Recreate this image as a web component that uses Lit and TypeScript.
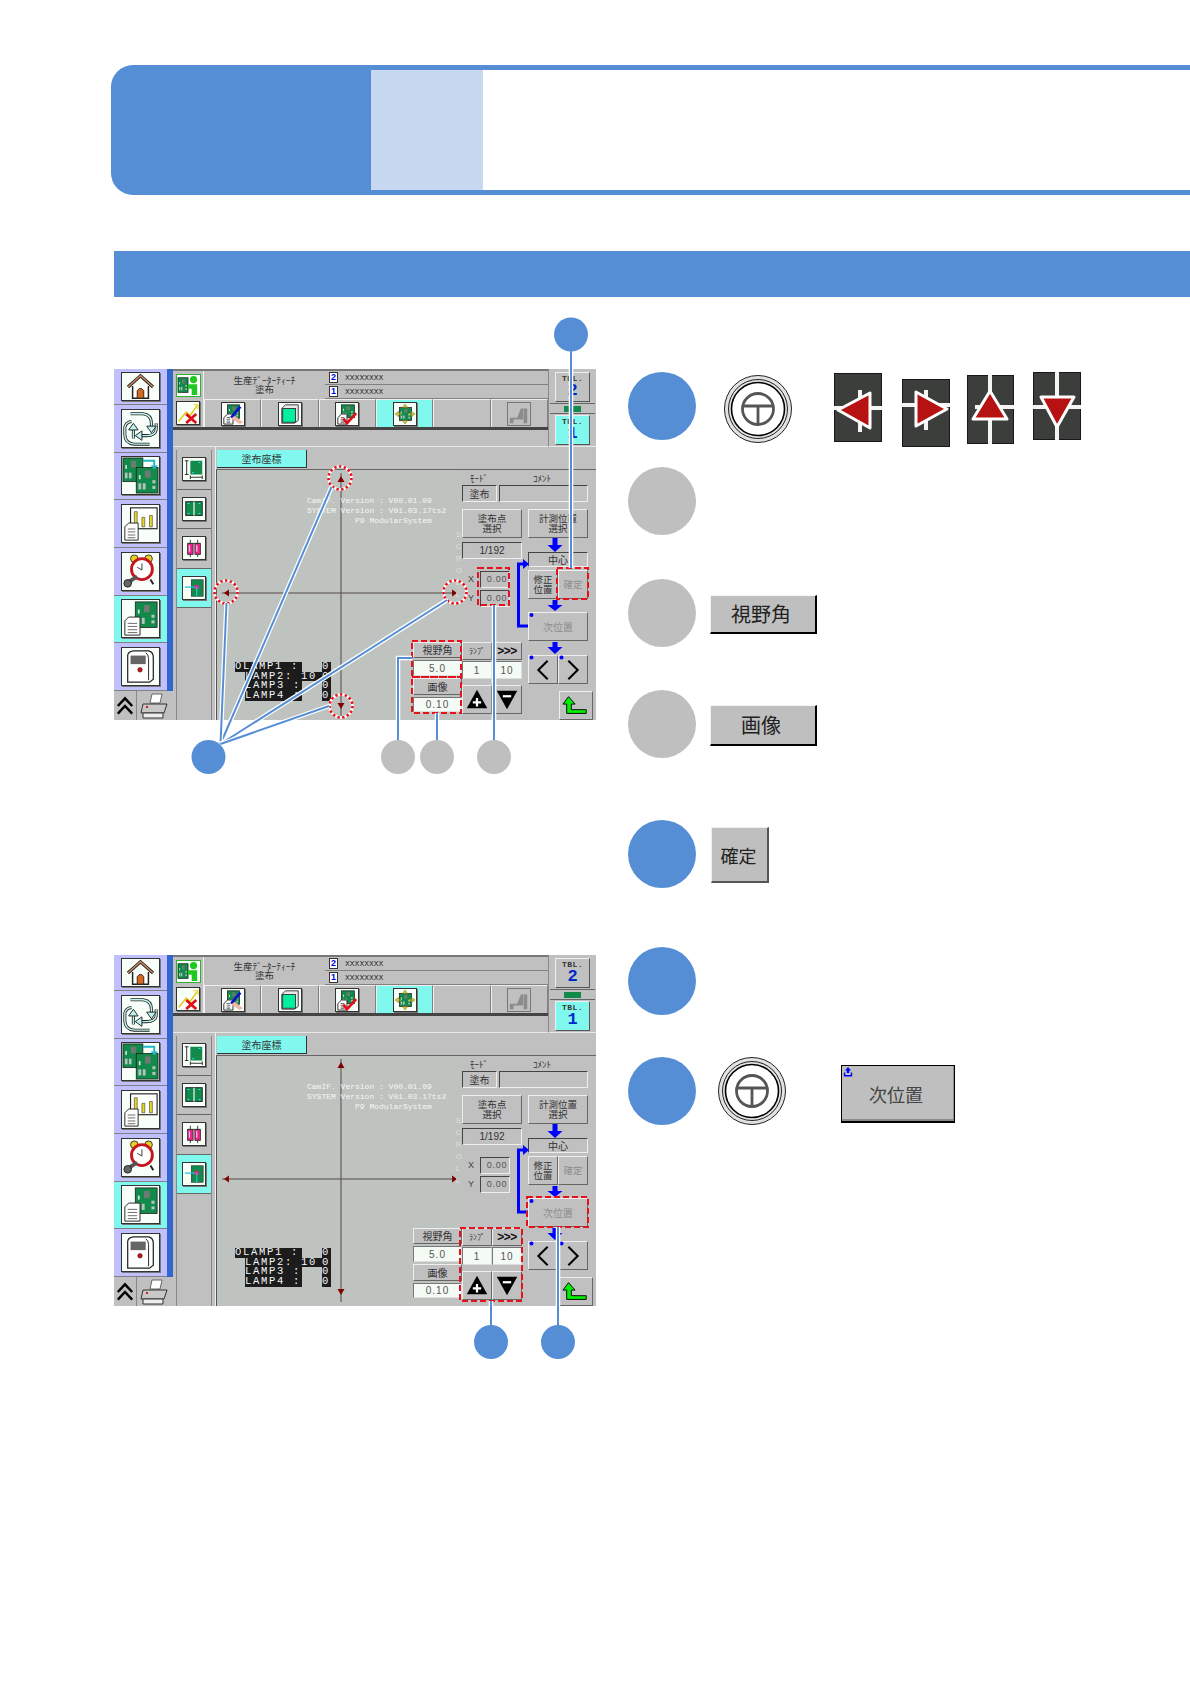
import { LitElement, html, svg, css } from "lit";
import { customElement } from "lit/decorators.js";

const pcb = (x: number, y: number, w: number, h: number) => svg`
  <rect x=${x} y=${y} width=${w} height=${h} fill="#128a4c" stroke="#1a1a1a" stroke-width=".8"/>
  <rect x=${x + w * 0.4} y=${y + h * 0.12} width=${w * 0.26} height=${h * 0.28} fill="#6d7a72"/>
  <rect x=${x + w * 0.1} y=${y + h * 0.62} width=${w * 0.13} height=${h * 0.24} fill="#b5c4bb"/>
  <rect x=${x + w * 0.3} y=${y + h * 0.62} width=${w * 0.13} height=${h * 0.24} fill="#b5c4bb"/>
  <rect x=${x + w * 0.74} y=${y + h * 0.5} width=${w * 0.14} height=${h * 0.12} fill="#b5c4bb"/>
  <rect x=${x + w * 0.74} y=${y + h * 0.72} width=${w * 0.14} height=${h * 0.12} fill="#b5c4bb"/>
  <rect x=${x + w * 0.12} y=${y + h * 0.3} width=${w * 0.08} height=${h * 0.16} fill="#d5e5da"/>`;

const doc = (x: number, y: number, w: number, h: number) => svg`
  <path d="M${x + 4} ${y}H${x + w}V${y + h}H${x}V${y + 4}Z" fill="#fff" stroke="#222"/>
  <path d="M${x + 3} ${y + h * 0.35}H${x + w - 3}M${x + 3} ${y + h * 0.52}H${x + w - 3}M${x + 3} ${y + h * 0.7}H${x + w - 3}M${x + 3} ${y + h * 0.86}H${x + w - 3}" stroke="#666"/>`;

const ic = {
  home: html`<svg viewBox="0 0 39 29"><path d="M11 14V27H28V14" fill="#fff" stroke="#222" stroke-width="1.6"/><path d="M6 15L19.5 3L33 15" fill="none" stroke="#222" stroke-width="3.4"/><path d="M6 15L19.5 3L33 15" fill="none" stroke="#d08a60" stroke-width="1.5"/><path d="M16 27V19Q19.5 14 23 19V27Z" fill="#d8681e" stroke="#222"/></svg>`,
  cycle: html`<svg viewBox="0 0 39 39"><g fill="none" stroke="#222" stroke-width="3.2"><path d="M9 4H22Q31 5 31 14V18"/><path d="M36 14V21Q35 27 26 27H20"/><path d="M29 36H13Q3 35 3 26V18Q4 13 10 12"/><path d="M12 30V20"/></g><g fill="none" stroke="#bff4f0" stroke-width="1.5"><path d="M9 4H22Q31 5 31 14V18"/><path d="M36 14V21Q35 27 26 27H20"/><path d="M29 36H13Q3 35 3 26V18Q4 13 10 12"/><path d="M12 30V20"/></g><path d="M26 17H36L31 24ZM21 22V32L14 27ZM7 21H17L12 14Z" fill="#bff4f0" stroke="#222"/></svg>`,
  pcbs: html`<svg viewBox="0 0 39 39">${pcb(1, 1, 21, 25)}${pcb(15, 11, 23, 27)}<path d="M22 4H34V10" fill="none" stroke="#1fb8c8" stroke-width="2"/><path d="M30 9H38L34 13Z" fill="#1fb8c8"/></svg>`,
  chart: html`<svg viewBox="0 0 39 39"><rect x="9" y="3" width="28" height="22" fill="#fff" stroke="#222" stroke-width="1.2"/><path d="M13 23V7h3v16zM21 23V13h3v10zM29 23V11h3v12z" fill="#e8d820" stroke="#333" stroke-width=".6"/>${doc(3, 19, 14, 18)}</svg>`,
  alarm: html`<svg viewBox="0 0 39 39"><circle cx="13" cy="6" r="4" fill="#e8d020" stroke="#333"/><circle cx="28" cy="6" r="4" fill="#e8d020" stroke="#333"/><path d="M11 28L8 33M30 28L33 33" stroke="#222" stroke-width="2"/><circle cx="21" cy="17" r="11" fill="#fff" stroke="#c8141e" stroke-width="3"/><path d="M21 11V18L16 15" fill="none" stroke="#333"/><path d="M16 25L6 31" stroke="#555" stroke-width="4"/><circle cx="6" cy="32" r="4" fill="#666" stroke="#222"/></svg>`,
  docpcb: html`<svg viewBox="0 0 39 39">${pcb(14, 2, 23, 27)}${doc(3, 18, 16, 19)}</svg>`,
  machine: html`<svg viewBox="0 0 39 39"><path d="M6 8Q6 4 12 3H28Q33 4 33 10V33L29 36H6Z" fill="#fff" stroke="#222" stroke-width="1.3"/><path d="M9 8H25V17H9Z" fill="#666"/><path d="M25 5Q28 7 28 11V34" fill="none" stroke="#222"/><circle cx="19" cy="23" r="2.4" fill="#d01010" stroke="#222" stroke-width=".6"/></svg>`,
  chev: html`<svg viewBox="0 0 23 29"><path d="M4 15L11.5 7L19 15M4 23L11.5 15L19 23" fill="none" stroke="#000" stroke-width="2.6"/></svg>`,
  printer: html`<svg viewBox="0 0 36 29"><path d="M15 3H25L23 12H13Z" fill="#fff" stroke="#666"/><path d="M6 13H30L27 22H4Z" fill="#c8c8c8" stroke="#333"/><path d="M6 22H26V27H6Z" fill="#eee" stroke="#333"/><path d="M9 16h2" stroke="#d02020" stroke-width="2"/></svg>`,
  teach: html`<svg viewBox="0 0 25 23">${pcb(1, 3, 11, 16)}<circle cx="18" cy="5" r="4" fill="#20c820"/><path d="M12 10H22V22H16V15H12Z" fill="#20c820"/></svg>`,
  xchart: html`<svg viewBox="0 0 24 24"><path d="M2 21L10 11L14 15L22 4" fill="none" stroke="#e8c810" stroke-width="1.6"/><path d="M18 3H23V8" fill="none" stroke="#e8c810"/><path d="M10 13L21 23M21 13L10 23" stroke="#e0101a" stroke-width="3"/></svg>`,
  pen: html`<svg viewBox="0 0 24 24">${pcb(6, 2, 13, 15)}${doc(2, 12, 10, 11)}<path d="M20 4L10 16" stroke="#1010d0" stroke-width="3"/><path d="M10 17L19 23L23 21L14 14Z" fill="#f0b8a8"/></svg>`,
  block: html`<svg viewBox="0 0 24 24"><path d="M3 6L7 2H21V19L17 22H3Z" fill="#e8e8e8" stroke="#333"/><rect x="4" y="6" width="14" height="15" fill="#00f0a0" stroke="#333"/></svg>`,
  check: html`<svg viewBox="0 0 24 24">${pcb(6, 2, 14, 14)}${doc(2, 12, 10, 11)}<path d="M8 17L12 22L22 11" fill="none" stroke="#e0101a" stroke-width="3"/></svg>`,
  move: html`<svg viewBox="0 0 24 24">${pcb(6, 5, 13, 14)}<path d="M1 12L5 9V15ZM23 12L19 9V15ZM12 1L9 5H15ZM12 23L9 19H15Z" fill="#d8c818" stroke="#555" stroke-width=".4"/><path d="M5 12H8M16 12H19" stroke="#d8c818"/></svg>`,
  grey: html`<svg viewBox="0 0 24 24"><path d="M2 16H10L14 6H21V22H17V18H6V22H2Z" fill="#8c8c8c"/><path d="M17 5V22" stroke="#aaa"/></svg>`,
  dim: html`<svg viewBox="0 0 24 24"><rect x="8" y="3" width="13" height="15" fill="#128a4c"/><path d="M17 5h2M10 16h2" stroke="#2ff"/><path d="M4 3V18M2 3H6M2 18H6M8 21H21M8 19V23M21 19V23" stroke="#222"/></svg>`,
  split: html`<svg viewBox="0 0 24 24"><rect x="3" y="4" width="18" height="15" fill="#128a4c" stroke="#222"/><path d="M12 4V19" stroke="#eee" stroke-width="1.4"/><path d="M5 6h2M17 6h2M5 17h2M17 17h2" stroke="#2ff"/></svg>`,
  tubes: html`<svg viewBox="0 0 24 24"><path d="M5 7H11V19H5ZM13 7H19V19H13Z" fill="#f0208c" stroke="#333"/><path d="M8 3V7M16 3V7M5 7H19M8 19V22M16 19V22" stroke="#333"/><path d="M7 9V16M15 9V16" stroke="#f8c0e0" stroke-width="1.4"/></svg>`,
  cal: html`<svg viewBox="0 0 24 24"><rect x="9" y="3" width="13" height="18" fill="#128a4c" stroke="#222" stroke-width=".6"/><circle cx="15" cy="11" r="2.6" fill="#f0208c"/><path d="M2 11H13M15 11V21" stroke="#1fc8d8" stroke-width="1.3"/></svg>`,
  back: html`<svg viewBox="0 0 34 29"><path d="M9 5L3 13H7V23H28V19H12V13H16Z" fill="#00ee00" stroke="#000"/></svg>`,
  left: html`<svg viewBox="0 0 30 29"><path d="M20 5L10 15L20 25" fill="none" stroke="#000" stroke-width="2.2"/></svg>`,
  right: html`<svg viewBox="0 0 30 29"><path d="M10 5L20 15L10 25" fill="none" stroke="#000" stroke-width="2.2"/></svg>`,
  plus: html`<svg viewBox="0 0 30 29"><path d="M15 4L26 24H4Z" fill="#000"/><path d="M15 13V22M10.5 17.5H19.5" stroke="#fff" stroke-width="2.4"/></svg>`,
  minus: html`<svg viewBox="0 0 30 29"><path d="M4 5H26L15 25Z" fill="#000"/><path d="M10.5 11H19.5" stroke="#fff" stroke-width="2.4"/></svg>`,
};

@customElement("hmi-screen")
class HmiScreen extends LitElement {
  static styles = css`
    :host { display: block; width: 482px; height: 351px; overflow: hidden; font-family: "Noto Sans CJK JP", "Liberation Sans", sans-serif; font-size: 10px; line-height: 1; color: #333; }
    * { box-sizing: border-box; }
    svg { display: block; width: 100%; height: 100%; }
    .screen { position: relative; display: flex; height: 351px; background: #c0c0c0; }
    .side { width: 59px; flex: none; display: flex; flex-direction: column; }
    .nav { height: 322px; display: grid; grid-template-rows: 36px repeat(6, 1fr); border-right: 6px solid #3366cc; }
    .nav-item { background: #c0c0ff; border-bottom: 1px solid #808080; display: flex; align-items: center; justify-content: center; }
    .nav-item.on { background: #80f8ee; }
    .ibox { background: #f8fff8; border: 1px solid #333; box-shadow: 1px 1px 0 #777; flex: none; }
    .b39 { width: 39px; height: 39px; }
    .b39s { width: 39px; height: 29px; }
    .b24 { width: 24px; height: 24px; }
    .side-foot { flex: 1; display: flex; }
    .chev { width: 23px; border-right: 1px solid #888; }
    .print { flex: 1; }
    .main { flex: 1; display: flex; flex-direction: column; min-width: 0; }
    .head { height: 78px; display: flex; }
    .head-l { width: 375px; display: flex; flex-direction: column; }
    .row-top { height: 30px; display: flex; border-top: 2px solid #777; }
    .cell-ic { width: 31px; display: flex; align-items: center; justify-content: center; border-right: 1px solid #eee; }
    .teach { width: 25px; height: 23px; background: #fff; border: 1px solid #30b030; }
    .title { width: 121px; display: flex; flex-direction: column; align-items: center; justify-content: center; font-size: 9.5px; line-height: 9.5px; }
    .files { flex: 1; display: flex; flex-direction: column; gap: 1px; }
    .file { flex: 1; display: flex; align-items: center; gap: 7px; padding-left: 4px; border-bottom: 1px solid #808080; font: 8px "Liberation Mono", monospace; color: #333; }
    .badge { width: 9px; height: 11px; background: #fff; border: 1px solid #333; color: #0000e0; font: bold 9px/9px "Liberation Sans", sans-serif; text-align: center; }
    .tools { height: 31px; display: flex; border-bottom: 3px solid #444; }
    .tool { flex: 1; display: flex; align-items: center; justify-content: center; border-top: 1px solid #eee; border-right: 1px solid #808080; border-left: 1px solid #f0f0f0; }
    .tool.first { flex: 0 0 31px; border-left: 0; border-top: 0; border-right: 1px solid #eee; }
    .tool.on { background: #80f8ee; }
    .tool.dim .ibox { background: #c0c0c0; border-color: #777; box-shadow: none; }
    .msg { flex: 1; border-bottom: 1px solid #e8e8e8; }
    .tbl-col { flex: 1; display: flex; flex-direction: column; align-items: center; padding-top: 3px; border-left: 1px solid #888; border-bottom: 1px solid #e8e8e8; }
    .tbl { width: 35px; height: 30px; background: #c0c0c0; border: 1px solid; border-color: #eee #555 #555 #eee; display: flex; flex-direction: column; align-items: center; padding-top: 2px; color: #333; }
    .tbl.on { background: #80f8ee; }
    .tbl small { font: bold 8px/8px "Liberation Mono", monospace; letter-spacing: .4px; }
    .tbl b { font: bold 17px/16px "Liberation Mono", monospace; color: #0028c8; }
    .strip { align-self: stretch; height: 11px; display: flex; align-items: center; justify-content: center; border-top: 1px solid #666; border-bottom: 1px solid #666; margin: 1px 1px; }
    .strip i { display: block; width: 17px; height: 6px; background: #128a4c; }
    .body { flex: 1; display: flex; min-height: 0; }
    .tabs { width: 43px; flex: none; padding-top: 3px; padding-left: 3px; padding-right: 3px; display: flex; flex-direction: column; border-right: 1px solid #eee; }
    .tabs-i { flex: 1; display: flex; flex-direction: column; border-left: 1px solid #888; border-right: 1px solid #888; }
    .tab-it { height: 39.5px; display: flex; align-items: center; justify-content: center; border-bottom: 1px solid #666; }
    .tab-it.on { background: #80f8ee; }
    .work { flex: 1; display: flex; flex-direction: column; min-width: 0; }
    .strip-tab { height: 22px; padding: 3px 0 0 1px; }
    .ctab { width: 90px; height: 18px; background: #80f8ee; display: flex; align-items: center; justify-content: center; font-size: 10px; border-right: 1px solid #333; border-bottom: 1px solid #333; }
    .wbody { flex: 1; display: flex; border-top: 1px solid #666; min-height: 0; }
    .canvas { position: relative; width: 246px; flex: none; background: #bec3bf; border-left: 1px solid #555; display: flex; justify-content: flex-end; align-items: flex-end; padding-bottom: 8px; }
    .cross { position: absolute; inset: 0; }
    .ver { position: absolute; left: 90px; top: 26px; font: 8px/10px "Liberation Mono", monospace; color: #f4f8f4; white-space: pre; }
    .lamps { position: absolute; left: 18px; top: 192px; font: 10.5px/9.7px "Liberation Mono", monospace; letter-spacing: 1.7px; color: #f6f6f6; }
    .lrow { display: flex; height: 9.7px; }
    .lrow span { background: #1c1c1c; white-space: pre; display: block; }
    .k1 { width: 67px; }
    .k2 { width: 57px; margin-left: 10px; }
    .k3 { width: 77px; margin-left: 10px; }
    .v { width: 9px; margin-left: 20px; }
    .v0 { width: 9px; }
    .scroll { position: absolute; right: 0; top: 59px; display: flex; flex-direction: column; font: 8px/12px "Liberation Sans", sans-serif; color: #dedede; }
    .cola { width: 49px; display: flex; flex-direction: column; gap: 2px; }
    .bevel { background: #c0c0c0; border: 1px solid; border-color: #eee #666 #666 #eee; display: flex; align-items: center; justify-content: center; text-align: center; }
    .c16 { height: 16px; }
    .c17 { height: 17px; }
    .c15 { height: 15px; }
    .fld { background: #f4faf4; border: 1px solid #ddd; border-top-color: #777; border-left-color: #777; display: flex; align-items: center; justify-content: center; font: 10px "Liberation Sans", sans-serif; letter-spacing: 1px; color: #555; }
    .panel { flex: 1; display: flex; flex-direction: column; padding-top: 4px; border-right: 3px solid transparent; }
    .labels { height: 10px; display: flex; font-size: 9px; color: #333; }
    .labels span:first-child { margin-left: 8px; width: 63px; }
    .modes { height: 17px; margin-top: 1px; display: flex; gap: 2px; }
    .sunk { border: 1px solid; border-color: #444 #eee #eee #444; display: flex; align-items: center; justify-content: center; }
    .m1 { width: 35px; }
    .m2 { width: 89px; }
    .cols { flex: 1; display: flex; gap: 6px; margin-top: 7px; }
    .colb { width: 60px; flex: none; display: flex; flex-direction: column; }
    .colc { flex: 1; display: flex; flex-direction: column; }
    .btn2 { height: 29px; font-size: 9.5px; line-height: 9.5px; width: 60px; flex: none; }
    .count { height: 17px; margin-top: 4px; font: 10px "Liberation Sans", sans-serif; }
    .xy { display: flex; height: 18px; align-items: center; }
    .xy.x { margin-top: 11px; }
    .xy.y { margin-top: 1px; }
    .xy span { width: 18px; text-align: center; font: 9px "Liberation Sans", sans-serif; color: #444; }
    .xy div { width: 30px; height: 17px; padding-left: 4px; font: 9px "Liberation Sans", sans-serif; letter-spacing: .8px; color: #555; }
    .pair { display: flex; }
    .pair > * { flex: 1; min-width: 0; }
    .lp { height: 18px; margin-top: 35px; }
    .small { font-size: 8px; }
    .arrows { font: bold 12px "Liberation Sans", sans-serif; letter-spacing: -.5px; color: #111; }
    .vals { height: 18px; margin-top: 1px; }
    .pm { height: 29px; margin-top: 6px; }
    .center { height: 15px; margin-top: 14px; width: 60px; }
    .fixrow { height: 29px; margin-top: 3px; width: 60px; flex: none; line-height: 9.5px; font-size: 9.5px; }
    .off { color: #8c8c8c; }
    .next { height: 29px; margin-top: 13px; width: 60px; flex: none; }
    .lr { height: 29px; margin-top: 14px; width: 60px; flex: none; }
    .ret { width: 34px; height: 29px; margin-top: 7px; align-self: flex-end; }
    .flow { position: absolute; inset: 0; pointer-events: none; }
  `;

  render() {
    const nav = [[ic.home, "b39s", false], [ic.cycle, "b39", false], [ic.pcbs, "b39", false], [ic.chart, "b39", false], [ic.alarm, "b39", false], [ic.docpcb, "b39", true], [ic.machine, "b39", false]] as const;
    const tools = [[ic.pen, ""], [ic.block, ""], [ic.check, ""], [ic.move, "on"], [null, ""], [ic.grey, "dim"]] as const;
    const tabs = [[ic.dim, false], [ic.split, false], [ic.tubes, false], [ic.cal, true]] as const;
    return html`<div class="screen">
      <div class="side">
        <div class="nav">${nav.map(([i, c, on]) => html`<div class="nav-item ${on ? "on" : ""}"><div class="ibox ${c}">${i}</div></div>`)}</div>
        <div class="side-foot"><div class="chev">${ic.chev}</div><div class="print">${ic.printer}</div></div>
      </div>
      <div class="main">
        <div class="head">
          <div class="head-l">
            <div class="row-top">
              <div class="cell-ic"><div class="teach">${ic.teach}</div></div>
              <div class="title"><span>生産ﾃﾞｰﾀｰﾃｨｰﾁ</span><span>塗布</span></div>
              <div class="files">
                <div class="file"><span class="badge">2</span>XXXXXXXX</div>
                <div class="file"><span class="badge">1</span>XXXXXXXX</div>
              </div>
            </div>
            <div class="tools">
              <div class="tool first"><div class="ibox b24">${ic.xchart}</div></div>
              ${tools.map(([i, c]) => html`<div class="tool ${c}">${i ? html`<div class="ibox b24">${i}</div>` : ""}</div>`)}
            </div>
            <div class="msg"></div>
          </div>
          <div class="tbl-col">
            <div class="tbl"><small>TBL.</small><b>2</b></div>
            <div class="strip"><i></i></div>
            <div class="tbl on"><small>TBL.</small><b>1</b></div>
          </div>
        </div>
        <div class="body">
          <div class="tabs"><div class="tabs-i">
            ${tabs.map(([i, on]) => html`<div class="tab-it ${on ? "on" : ""}"><div class="ibox b24">${i}</div></div>`)}
          </div></div>
          <div class="work">
            <div class="strip-tab"><div class="ctab">塗布座標</div></div>
            <div class="wbody">
              <div class="canvas">
                <svg class="cross" viewBox="0 0 246 251">
                  <path d="M124.500 3V247M5 123.500H240" stroke="#54484a" fill="none"/>
                  <path d="M124.500 6L128 12H121ZM124.500 240L121 234H128ZM7 123.500L12 120V127ZM241 123.500L236 120V127Z" fill="#800000"/>
                </svg>
                <div class="ver">CamIF. Version : V00.01.09
SYSTEM Version : V01.03.17ts2
          P9 ModularSystem</div>
                <div class="lamps">
                  <div class="lrow"><span class="k1">OLAMP1 :</span><span class="v">0</span></div>
                  <div class="lrow"><span class="k3">LAMP2: 10</span><span class="v0">0</span></div>
                  <div class="lrow"><span class="k2">LAMP3 :</span><span class="v">0</span></div>
                  <div class="lrow"><span class="k2">LAMP4 :</span><span class="v">0</span></div>
                </div>
                <div class="scroll"><span>S</span><span>C</span><span>R</span><span>O</span><span>L</span><span>L</span></div>
                <div class="cola">
                  <div class="bevel c16">視野角</div>
                  <div class="fld c16">5.0</div>
                  <div class="bevel c17">画像</div>
                  <div class="fld c15">0.10</div>
                </div>
              </div>
              <div class="panel">
                <div class="labels"><span>ﾓｰﾄﾞ</span><span>ｺﾒﾝﾄ</span></div>
                <div class="modes"><div class="sunk m1">塗布</div><div class="sunk m2"></div></div>
                <div class="cols">
                  <div class="colb">
                    <div class="bevel btn2">塗布点<br />選択</div>
                    <div class="sunk count">1/192</div>
                    <div class="xy x"><span>X</span><div class="sunk">0.00</div></div>
                    <div class="xy y"><span>Y</span><div class="sunk">0.00</div></div>
                    <div class="pair lp"><div class="bevel small">ﾗﾝﾌﾟ</div><div class="bevel arrows">&gt;&gt;&gt;</div></div>
                    <div class="pair vals"><div class="fld">1</div><div class="fld">10</div></div>
                    <div class="pair pm"><div class="bevel">${ic.plus}</div><div class="bevel">${ic.minus}</div></div>
                  </div>
                  <div class="colc">
                    <div class="bevel btn2">計測位置<br />選択</div>
                    <div class="sunk center">中心</div>
                    <div class="pair fixrow"><div class="bevel">修正<br />位置</div><div class="bevel off">確定</div></div>
                    <div class="bevel next off">次位置</div>
                    <div class="pair lr"><div class="bevel">${ic.left}</div><div class="bevel">${ic.right}</div></div>
                    <div class="bevel ret">${ic.back}</div>
                  </div>
                </div>
              </div>
            </div>
          </div>
        </div>
      </div>
      <svg class="flow" viewBox="114 369 482 351">
        <path d="M552.5 538h5v7h5l-7.5 7l-7.5-7h5zM552.5 600h5v5h5l-7.5 6l-7.5-6h5zM552.5 642h5v5h5l-7.5 7l-7.5-7h5z" fill="#0000ff"/>
        <path d="M524 564H518.500V626H528" fill="none" stroke="#0000ff" stroke-width="3"/>
        <path d="M523 559L529 564L523 569Z" fill="#0000ff"/>
        <circle cx="531.500" cy="615" r="2" fill="#0000ff"/><circle cx="531.500" cy="657.500" r="2" fill="#0000ff"/><circle cx="561.500" cy="657.500" r="2" fill="#0000ff"/>
      </svg>
    </div>`;
  }
}

const lead = (d: string) => svg`<path d=${d} fill="none" stroke="#fff" stroke-width="4.5"/><path d=${d} fill="none" stroke="#558ed5" stroke-width="2"/>`;
const dash = (x: number, y: number, w: number, h: number) => svg`<rect x=${x} y=${y} width=${w} height=${h} fill="none" stroke="#e8101a" stroke-width="2" stroke-dasharray="6 3"/>`;
const dot = (cx: number, cy: number) => svg`<circle cx=${cx} cy=${cy} r="11.500" fill="none" stroke="#fff" stroke-width="2.600"/><circle cx=${cx} cy=${cy} r="11.500" fill="none" stroke="#e8101a" stroke-width="2.600" stroke-dasharray="2.400 2.400"/>`;

const knob = html`<svg class="knob" viewBox="0 0 70 70"><circle cx="35" cy="35" r="33.500" fill="#e2e2e2" stroke="#222"/><circle cx="35" cy="35" r="29.500" fill="#e2e2e2" stroke="#222"/><circle cx="35" cy="35" r="26.500" fill="#fff" stroke="#000" stroke-width="1.600"/><circle cx="35" cy="35" r="15.500" fill="#fff" stroke="#555" stroke-width="2.800"/><path d="M20 32H50M35 32V50" stroke="#555" stroke-width="2.800" fill="none"/></svg>`;

const tile = (w: number, h: number, lines: string, tri: string) => html`<svg viewBox="0 0 ${w} ${h}" width=${w} height=${h}><rect x=".5" y=".5" width=${w - 1} height=${h - 1} fill="#3c3e3c" stroke="#181818"/><path d=${lines} stroke="#f4f4f4" stroke-width="4" fill="none"/><path d=${tri} fill="#b61212" stroke="#fff" stroke-width="3" stroke-linejoin="round"/></svg>`;

@customElement("app-root")
class AppRoot extends LitElement {
  static styles = css`
    :host { display: block; width: 1190px; min-height: 1684px; background: #fff; overflow: hidden; font-family: "Noto Sans CJK JP", "Liberation Sans", sans-serif; }
    * { box-sizing: border-box; }
    .page { padding: 65px 0 0 111px; }
    .hero { height: 130px; display: flex; }
    .hero-a { width: 260px; background: #558ed5; border-radius: 22px 0 0 22px; }
    .hero-b { flex: 1; display: flex; border-top: 5px solid #558ed5; border-bottom: 5px solid #558ed5; }
    .hero-c { width: 112px; background: #c6d9f1; }
    .bar { height: 46px; margin: 56px 0 0 3px; background: #558ed5; }
    .content { display: flex; margin-left: 3px; }
    .left { width: 482px; flex: none; }
    .fig { position: relative; height: 351px; }
    .fig.one { margin-top: 72px; }
    .fig.two { margin-top: 235px; }
    .over { position: absolute; left: 0; top: 0; width: 482px; height: 351px; overflow: visible; pointer-events: none; }
    .steps { margin: 75px 0 0 32px; display: flex; flex-direction: column; }
    .step { display: flex; align-items: flex-start; height: 68px; }
    .num { width: 68px; height: 68px; border-radius: 50%; background: #558ed5; flex: none; }
    .num.g { background: #bfbfbf; }
    .r2 { margin-top: 27px; }
    .r3 { margin-top: 44px; }
    .r4 { margin-top: 43px; }
    .r5 { margin-top: 62px; }
    .r6 { margin-top: 59px; }
    .r7 { margin-top: 42px; }
    .kn { width: 70px; height: 70px; flex: none; }
    .kn svg { display: block; width: 70px; height: 70px; }
    .k1 { margin: 2px 0 0 27px; }
    .t { flex: none; display: block; line-height: 0; }
    .t1 { margin: 1px 0 0 41px; }
    .t2 { margin: 7px 0 0 20px; }
    .t3 { margin: 3px 0 0 17px; }
    .t4 { margin: 0 0 0 19px; }
    .sbtn { background: #bfbfbf; color: #222; display: flex; align-items: center; justify-content: center; flex: none; padding-right: 4px; border: 1px solid; border-color: #f4f4f4 #000 #000 #f4f4f4; border-width: 1px 2px 2px 1px; font-size: 20px; line-height: 1; }
    .s3 { width: 107px; height: 39px; margin: 16px 0 0 14px; }
    .s4 { width: 107px; height: 41px; margin: 15px 0 0 14px; }
    .s5 { width: 58px; height: 56px; margin: 7px 0 0 15px; font-size: 18px; padding-right: 2px; border-color: #eee #555 #555 #eee; }
    .k7 { margin: -1px 0 0 21px; }
    .s7 { position: relative; width: 114px; height: 58px; margin: 8px 0 0 54px; font-size: 18px; color: #444; border: 1px solid #000; border-bottom-width: 2px; box-shadow: inset -1px -2px 0 #8a8a8a; }
    .s7 svg { position: absolute; left: 1px; top: 1px; }
  `;

  render() {
    return html`<div class="page">
      <div class="hero"><div class="hero-a"></div><div class="hero-b"><div class="hero-c"></div></div></div>
      <div class="bar"></div>
      <div class="content">
        <div class="left">
          <div class="fig one">
            <hmi-screen></hmi-screen>
            <svg class="over" viewBox="114 369 482 351">
              ${dash(557, 568, 31, 31)}${dash(478, 568, 31, 37)}${dash(412, 641, 49, 36)}${dash(412, 677, 49, 36)}
              ${dot(340, 478)}${dot(226, 592)}${dot(455, 592)}${dot(341, 706)}
              ${lead("M571 350V568")}
              ${lead("M331.500 487L220.500 744")}${lead("M226.500 603L220.500 744")}${lead("M447 600L220.500 744")}${lead("M329 706L220.500 744")}
              ${lead("M398 742V658H412")}${lead("M437 742V713")}${lead("M494 742V605")}
              <circle cx="571" cy="334.500" r="17" fill="#558ed5"/>
              <circle cx="208.500" cy="757" r="17" fill="#558ed5"/>
              <circle cx="398" cy="757" r="17" fill="#bfbfbf"/>
              <circle cx="437" cy="757" r="17" fill="#bfbfbf"/>
              <circle cx="494" cy="757" r="17" fill="#bfbfbf"/>
            </svg>
          </div>
          <div class="fig two">
            <hmi-screen></hmi-screen>
            <svg class="over" viewBox="114 955 482 351">
              ${dash(460, 1228, 62, 73)}${dash(527, 1197, 61, 30)}
              ${lead("M491 1301V1327")}${lead("M558 1227V1327")}
              <circle cx="491" cy="1342" r="17" fill="#558ed5"/>
              <circle cx="558" cy="1342" r="17" fill="#558ed5"/>
            </svg>
          </div>
        </div>
        <div class="steps">
          <div class="step">
            <div class="num"></div>
            <div class="kn k1">${knob}</div>
            <div class="t t1">${tile(48, 69, "M0 35H48M26 17V59", "M4 37L36 20V55Z")}</div>
            <div class="t t2">${tile(48, 68, "M0 26H48M24 11V51", "M45 30L14 13V47Z")}</div>
            <div class="t t3">${tile(47, 69, "M8 32H47M23 0V69", "M23 16L6 44H40Z")}</div>
            <div class="t t4">${tile(48, 68, "M0 35H48M24 0V68", "M24 55L8 25H41Z")}</div>
          </div>
          <div class="step r2"><div class="num g"></div></div>
          <div class="step r3"><div class="num g"></div><div class="sbtn s3">視野角</div></div>
          <div class="step r4"><div class="num g"></div><div class="sbtn s4">画像</div></div>
          <div class="step r5"><div class="num"></div><div class="sbtn s5">確定</div></div>
          <div class="step r6"><div class="num"></div></div>
          <div class="step r7">
            <div class="num"></div>
            <div class="kn k7">${knob}</div>
            <div class="sbtn s7">
              <svg viewBox="0 0 10 10" width="10" height="10"><path d="M5 0L8 3.500H6.200V6H3.800V3.500H2ZM.8 5.500H2.200V8H7.800V5.500H9.200V9.400H.8Z" fill="#0000ff"/></svg>
              次位置
            </div>
          </div>
        </div>
      </div>
    </div>`;
  }
}
